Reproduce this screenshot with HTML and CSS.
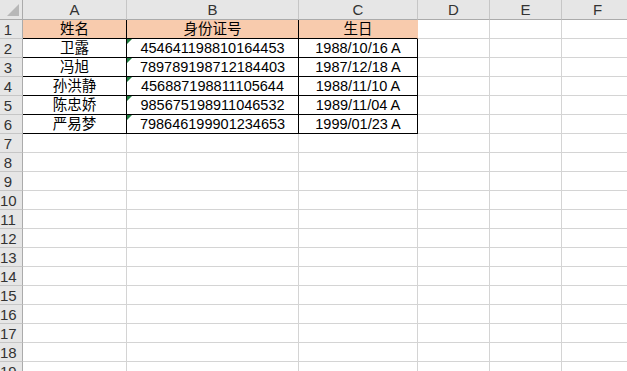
FILE: index.html
```html
<!DOCTYPE html>
<html lang="zh-CN">
<head>
    <meta charset="UTF-8">
    <title>身份证号</title>
    <link rel="stylesheet" href="styles.css">
</head>
<body>
<table class="sheet">
    <colgroup>
        <col class="c-idx">
        <col class="c-a">
        <col class="c-b">
        <col class="c-c">
        <col class="c-x">
        <col class="c-x">
        <col class="c-x">
    </colgroup>
    <thead>
        <tr>
            <th class="corner"><span class="corner-tri"></span></th>
            <th>A</th><th>B</th><th>C</th><th>D</th><th>E</th><th>F</th>
        </tr>
    </thead>
    <tbody>
        <tr class="head-row">
            <th>1</th>
            <td class="fill line">姓名</td>
            <td class="fill line">身份证号</td>
            <td class="fill last">生日</td>
            <td></td><td></td><td></td>
        </tr>
        <tr class="data">
            <th>2</th>
            <td>卫露</td>
            <td class="txt">454641198810164453</td>
            <td>1988/10/16 A</td>
            <td></td><td></td><td></td>
        </tr>
        <tr class="data">
            <th>3</th>
            <td>冯旭</td>
            <td class="txt">789789198712184403</td>
            <td>1987/12/18 A</td>
            <td></td><td></td><td></td>
        </tr>
        <tr class="data">
            <th>4</th>
            <td>孙洪静</td>
            <td class="txt">456887198811105644</td>
            <td>1988/11/10 A</td>
            <td></td><td></td><td></td>
        </tr>
        <tr class="data">
            <th>5</th>
            <td>陈忠娇</td>
            <td class="txt">985675198911046532</td>
            <td>1989/11/04 A</td>
            <td></td><td></td><td></td>
        </tr>
        <tr class="data">
            <th>6</th>
            <td>严易梦</td>
            <td class="txt">798646199901234653</td>
            <td>1999/01/23 A</td>
            <td></td><td></td><td></td>
        </tr>
        <tr><th>7</th><td></td><td></td><td></td><td></td><td></td><td></td></tr>
        <tr><th>8</th><td></td><td></td><td></td><td></td><td></td><td></td></tr>
        <tr><th>9</th><td></td><td></td><td></td><td></td><td></td><td></td></tr>
        <tr><th>10</th><td></td><td></td><td></td><td></td><td></td><td></td></tr>
        <tr><th>11</th><td></td><td></td><td></td><td></td><td></td><td></td></tr>
        <tr><th>12</th><td></td><td></td><td></td><td></td><td></td><td></td></tr>
        <tr><th>13</th><td></td><td></td><td></td><td></td><td></td><td></td></tr>
        <tr><th>14</th><td></td><td></td><td></td><td></td><td></td><td></td></tr>
        <tr><th>15</th><td></td><td></td><td></td><td></td><td></td><td></td></tr>
        <tr><th>16</th><td></td><td></td><td></td><td></td><td></td><td></td></tr>
        <tr><th>17</th><td></td><td></td><td></td><td></td><td></td><td></td></tr>
        <tr><th>18</th><td></td><td></td><td></td><td></td><td></td><td></td></tr>
        <tr><th>19</th><td></td><td></td><td></td><td></td><td></td><td></td></tr>
    </tbody>
</table>
</body>
</html>
```

FILE: styles.css
```css
html, body {
    margin: 0;
    padding: 0;
    overflow: hidden;
    background-color: #fff;
}
.sheet {
    table-layout: fixed;
    border-collapse: separate;
    border-spacing: 0;
    width: 634px;
    font-family: "Liberation Sans", "Noto Sans CJK SC", sans-serif;
    font-size: 14.5px;
    color: #000;
}
.c-idx { width: 23px; }
.c-a { width: 104px; }
.c-b { width: 172px; }
.c-c { width: 119px; }
.c-x { width: 72px; }

.sheet th, .sheet td {
    box-sizing: border-box;
    padding: 0;
    height: 19px;
    max-height: 19px;
    line-height: 17px;
    white-space: nowrap;
    overflow: hidden;
    text-align: center;
    border-right: 1px solid #d4d4d4;
    border-bottom: 1px solid #d4d4d4;
}
.sheet tr {
    height: 19px;
}

/* column letters */
.sheet thead th {
    height: 20px;
    line-height: 19px;
    font-size: 15px;
    font-weight: normal;
    background-color: #e6e6e6;
    color: #333;
    border-right: 1px solid #c6c6c6;
    border-bottom: 1px solid #ababab;
}
.sheet thead th.corner {
    position: relative;
    border-right: 1px solid #ababab;
}
.corner-tri {
    position: absolute;
    right: 3px;
    bottom: 3px;
    width: 0;
    height: 0;
    border-left: 12px solid transparent;
    border-bottom: 12px solid #b8b8b8;
}

/* row numbers */
.sheet tbody th {
    font-size: 15px;
    font-weight: normal;
    background-color: #e6e6e6;
    color: #333;
    padding-right: 6px;
    border-right: 1px solid #ababab;
    border-bottom: 1px solid #c6c6c6;
}

.head-row td {
    padding-top: 1px;
}
.head-row .fill {
    background-color: #f8cbad;
    border-bottom: 1px solid #000;
}
.head-row .line {
    border-right: 1px solid #000;
}
.head-row .last {
    border-right: 1px solid #f8cbad;
}

.data td:nth-child(-n+4) {
    padding-top: 1px;
    border-right: 1px solid #000;
    border-bottom: 1px solid #000;
}
.data td.txt {
    position: relative;
}
.data td.txt::before {
    content: "";
    position: absolute;
    left: 0;
    top: 0;
    border-top: 5px solid #1d7a3e;
    border-right: 5px solid transparent;
}
```
